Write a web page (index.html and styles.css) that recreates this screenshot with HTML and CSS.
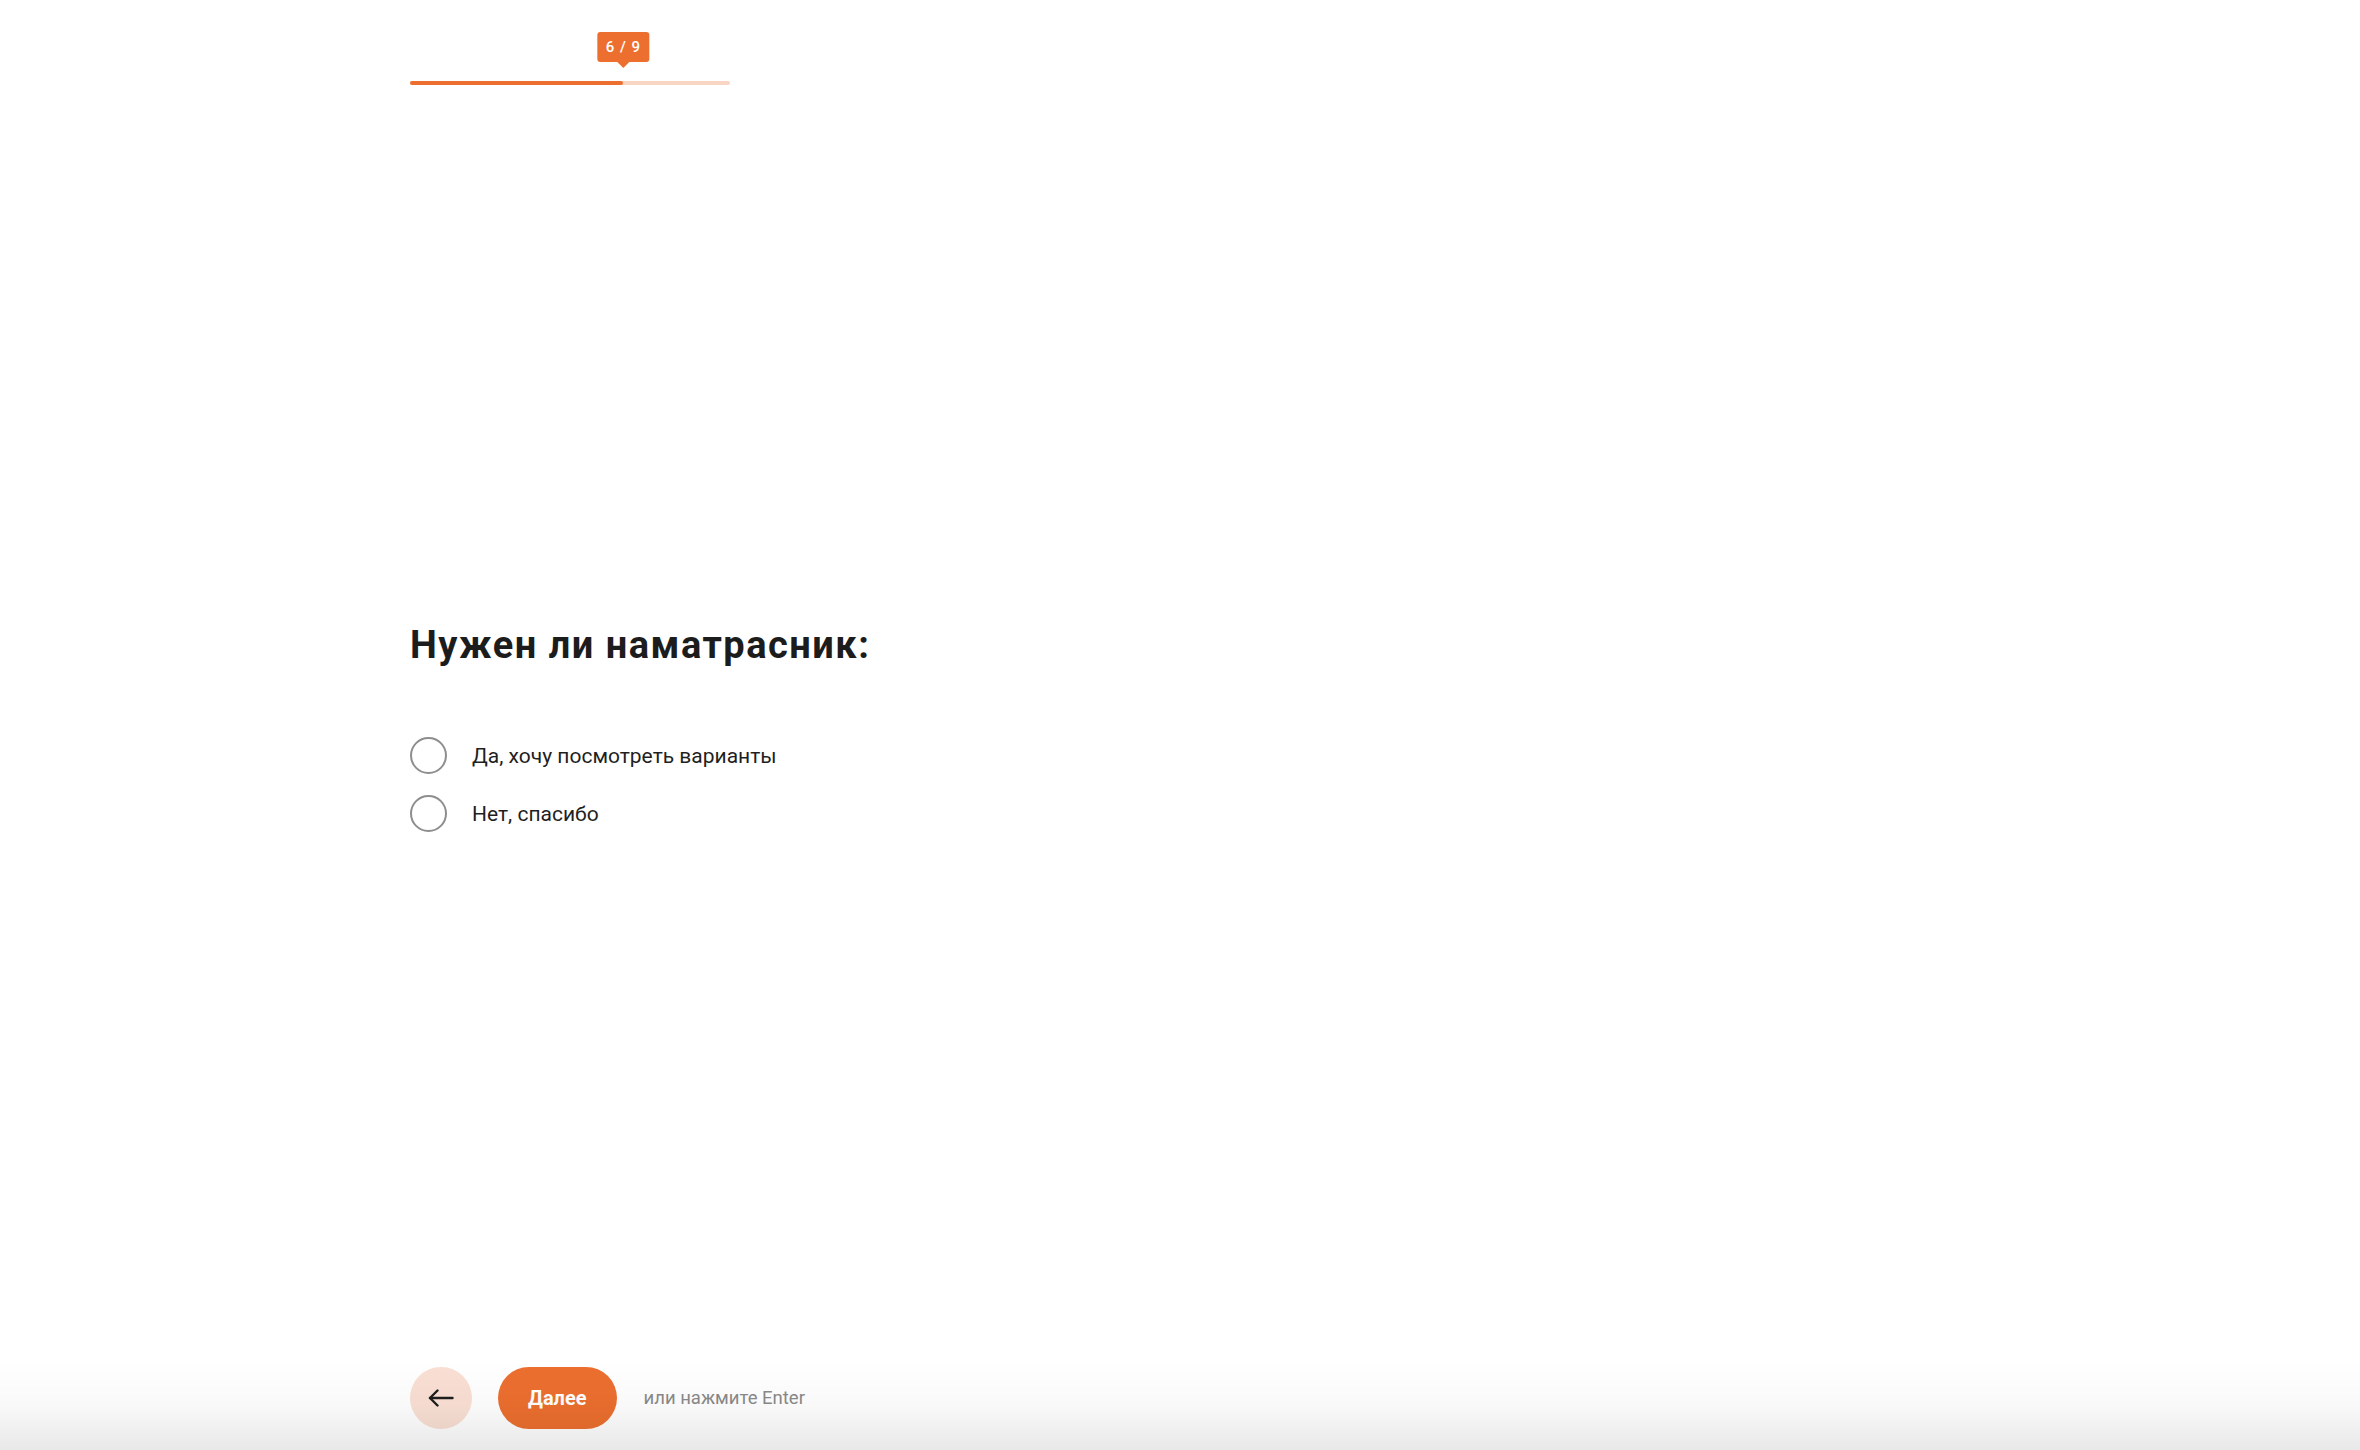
FILE: index.html
```html
<!DOCTYPE html>
<html lang="ru">
<head>
<meta charset="utf-8">
<title>Квиз</title>
<link rel="stylesheet" href="styles.css">
</head>
<body>
<div class="page">
  <header class="progress-area">
    <div class="progress">
      <div class="progress-fill" style="width: 66.667%"></div>
      <div class="progress-tip" style="left: 66.667%">6 / 9</div>
    </div>
  </header>

  <main class="question">
    <h1 class="question-title">Нужен ли наматрасник:</h1>
    <div class="options">
      <label class="option">
        <span class="radio"></span>
        <span class="option-text">Да, хочу посмотреть варианты</span>
      </label>
      <label class="option">
        <span class="radio"></span>
        <span class="option-text">Нет, спасибо</span>
      </label>
    </div>
  </main>

  <footer class="nav">
    <button class="back-btn" type="button" aria-label="Назад">
      <svg width="26" height="18" viewBox="0 0 26 18" fill="none" stroke="#1e1e1e" stroke-width="2.4" stroke-linecap="round" stroke-linejoin="round">
        <path d="M24.5 9H2"/>
        <path d="M9.5 1.5L2 9l7.5 7.5"/>
      </svg>
    </button>
    <button class="next-btn" type="button">Далее</button>
    <span class="hint">или нажмите Enter</span>
  </footer>
</div>
<div class="bottom-shade"></div>
</body>
</html>
```

FILE: styles.css
```css
* { box-sizing: border-box; }

html, body {
  margin: 0;
  padding: 0;
  background: #ffffff;
  font-family: Roboto, "Noto Sans", "Liberation Sans", sans-serif;
  color: #1c1c1c;
}

.page {
  width: 1540px;
  margin: 0 auto;
  min-height: 100vh;
  display: flex;
  flex-direction: column;
}

.progress-area {
  padding-top: 81px;
}

.progress {
  position: relative;
  width: 320px;
  height: 4px;
  border-radius: 2px;
  background: #f9d6c4;
}

.progress-fill {
  height: 100%;
  border-radius: 2px;
  background: #ec6f2f;
}

.progress-tip {
  position: absolute;
  bottom: 23px;
  transform: translateX(-50%);
  height: 30px;
  padding: 0 8px;
  border-radius: 3px;
  background: #ec6f2f;
  color: #ffffff;
  font-size: 15px;
  font-weight: 500;
  letter-spacing: 1px;
  line-height: 30px;
  white-space: nowrap;
}

.progress-tip::after {
  content: "";
  position: absolute;
  left: 50%;
  top: 100%;
  margin-left: -6px;
  border-left: 6px solid transparent;
  border-right: 6px solid transparent;
  border-top: 6px solid #ec6f2f;
}

.question {
  flex: 1;
  display: flex;
  flex-direction: column;
  justify-content: center;
  padding-top: 2px;
}

.question-title {
  margin: 0 0 69px;
  font-size: 38px;
  line-height: 46px;
  font-weight: 700;
  letter-spacing: 1.5px;
  color: #1c1c1c;
}

.options {
  display: flex;
  flex-direction: column;
  gap: 21px;
}

.option {
  display: flex;
  align-items: center;
  gap: 25px;
  cursor: pointer;
}

.radio {
  width: 37px;
  height: 37px;
  flex: none;
  border: 2px solid #8e8e8e;
  border-radius: 50%;
  background: #ffffff;
}

.option-text {
  font-size: 21px;
  line-height: 26px;
  color: #1f1f1f;
}

.nav {
  display: flex;
  align-items: center;
  padding-bottom: 21px;
}

.back-btn {
  width: 62px;
  height: 62px;
  border: none;
  border-radius: 50%;
  background: #fae0d4;
  display: flex;
  align-items: center;
  justify-content: center;
  padding: 0;
  margin-right: 26px;
  cursor: pointer;
}

.next-btn {
  height: 62px;
  padding: 0 30px;
  border: none;
  border-radius: 31px;
  background: #ec6f2f;
  color: #ffffff;
  font-family: Roboto, "Noto Sans", "Liberation Sans", sans-serif;
  font-size: 20px;
  font-weight: 700;
  cursor: pointer;
  margin-right: 27px;
}

.hint {
  font-size: 18.5px;
  color: #8a8a8a;
}

.bottom-shade {
  position: fixed;
  left: 0;
  right: 0;
  bottom: 0;
  height: 90px;
  pointer-events: none;
  background: linear-gradient(to bottom, rgba(0, 0, 0, 0) 0%, rgba(0, 0, 0, 0.025) 50%, rgba(0, 0, 0, 0.09) 100%);
}
```
